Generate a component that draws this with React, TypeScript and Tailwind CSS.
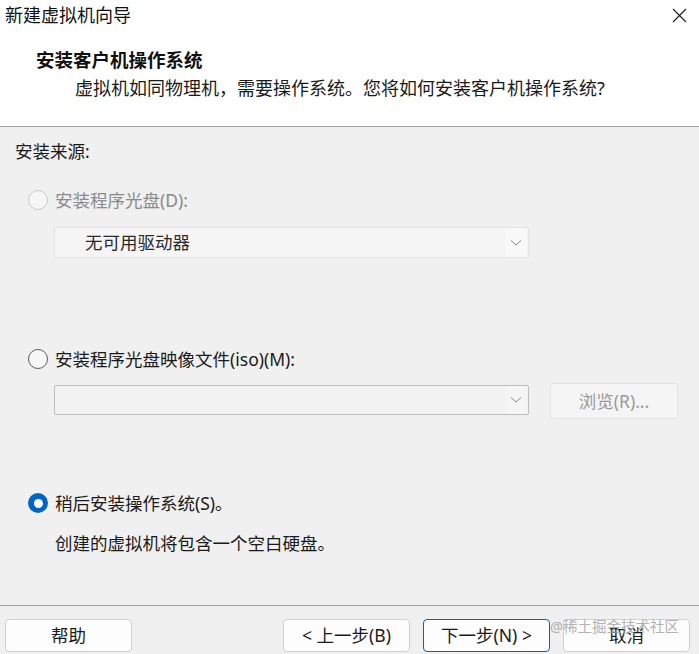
import React from "react";

const font = { fontFamily: '"Noto Sans", "Noto Sans CJK SC", sans-serif' };

function Chevron() {
  return (
    <svg width="12" height="8" viewBox="0 0 12 8" className="text-[#8a8a8a]">
      <path d="M1 1.5 L6 6 L11 1.5" fill="none" stroke="currentColor" strokeWidth="1" />
    </svg>
  );
}

function Radio({ state }: { state: "disabled" | "off" | "on" }) {
  if (state === "on") {
    return (
      <div className="w-[20px] h-[20px] rounded-full bg-[#0067c0] flex items-center justify-center shrink-0">
        <div className="w-[9px] h-[9px] rounded-full bg-white" />
      </div>
    );
  }
  if (state === "disabled") {
    return <div className="w-[20px] h-[20px] rounded-full border border-[#c9c9c9] bg-[#f6f6f6] shrink-0" />;
  }
  return <div className="w-[20px] h-[20px] rounded-full border border-[#5c5c5c] bg-[#f7f7f7] shrink-0" />;
}

function Btn({ children, primary }: { children: React.ReactNode; primary?: boolean }) {
  return (
    <div
      className={
        "w-[127px] h-[33px] rounded-[4px] flex items-center justify-center text-[17.5px] text-[#1a1a1a] bg-[#fdfdfd] border " +
        (primary ? "border-[#0067c0]" : "border-[#d0d0d0]")
      }
    >
      {children}
    </div>
  );
}

export default function App() {
  return (
    <div className="w-[699px] h-[654px] bg-[#f0f0f0] flex flex-col overflow-hidden" style={font}>
      {/* Header */}
      <div className="h-[127px] bg-white border-b border-[#a0a0a0] flex flex-col shrink-0">
        <div className="h-[31px] flex items-center justify-between pl-[5px] pr-[12px]">
          <span className="text-[18px] text-[#111]">新建虚拟机向导</span>
          <svg width="15" height="15" viewBox="0 0 15 15">
            <path d="M1 1 L14 14 M14 1 L1 14" stroke="#222" strokeWidth="1.2" fill="none" />
          </svg>
        </div>
        <div className="h-[24px] mt-[17px] pl-[36px] flex items-center text-[18.5px] font-bold text-[#111]">
          安装客户机操作系统
        </div>
        <div className="h-[24px] mt-[4px] pl-[75px] flex items-center text-[18px] text-[#1a1a1a]">
          虚拟机如同物理机，需要操作系统。您将如何安装客户机操作系统?
        </div>
      </div>

      {/* Body */}
      <div className="h-[478px] flex flex-col shrink-0">
        <div className="h-[24px] mt-[12px] pl-[15px] flex items-center text-[17.5px] text-[#1a1a1a]">安装来源:</div>

        <div className="h-[24px] mt-[25px] pl-[28px] flex items-center gap-[7px]">
          <Radio state="disabled" />
          <span className="text-[17.5px] text-[#8a8a8a]">安装程序光盘(D):</span>
        </div>

        <div className="mt-[15px] ml-[54px] w-[475px] h-[31px] bg-[#f5f5f5] border border-[#e3e3e3] rounded-[2px] flex items-center justify-between">
          <span className="pl-[30px] text-[17.5px] text-[#2a2a2a]">无可用驱动器</span>
          <div className="h-full w-[22px] flex items-center justify-center mr-[1px] bg-[#f8f8f8]">
            <Chevron />
          </div>
        </div>

        <div className="h-[24px] mt-[89px] pl-[28px] flex items-center gap-[7px]">
          <Radio state="off" />
          <span className="text-[17.5px] text-[#1a1a1a]">安装程序光盘映像文件(iso)(M):</span>
        </div>

        <div className="mt-[12px] h-[36px] flex items-start">
          <div className="mt-[2px] ml-[54px] w-[475px] h-[30px] bg-[#f2f2f2] border border-[#bdbdbd] rounded-[2px] flex items-center justify-end">
            <div className="h-full w-[22px] flex items-center justify-center mr-[1px] bg-[#f5f5f5]">
              <Chevron />
            </div>
          </div>
          <div className="ml-[21px] w-[128px] h-[36px] bg-[#f5f5f5] border border-[#e3e3e3] rounded-[3px] flex items-center justify-center text-[17.5px] text-[#9a9a9a]">
            浏览(R)...
          </div>
        </div>

        <div className="h-[24px] mt-[72px] pl-[28px] flex items-center gap-[7px]">
          <Radio state="on" />
          <span className="text-[17.5px] text-[#1a1a1a]">稍后安装操作系统(S)。</span>
        </div>

        <div className="h-[24px] mt-[16px] pl-[55px] flex items-center text-[17.5px] text-[#1a1a1a]">
          创建的虚拟机将包含一个空白硬盘。
        </div>
      </div>

      {/* Footer */}
      <div className="border-t border-[#a0a0a0] flex-1 relative">
        <div className="mt-[13px] flex items-center pl-[5px] pr-[9px]">
          <Btn>帮助</Btn>
          <div className="flex-1" />
          <div className="flex gap-[13px]">
            <Btn>&lt; 上一步(B)</Btn>
            <Btn primary>下一步(N) &gt;</Btn>
            <Btn>取消</Btn>
          </div>
        </div>
        <div className="absolute left-[550px] top-[10px] text-[14.5px] text-[#a0a0a0] opacity-80 pointer-events-none whitespace-nowrap">
          @稀土掘金技术社区
        </div>
      </div>
    </div>
  );
}
